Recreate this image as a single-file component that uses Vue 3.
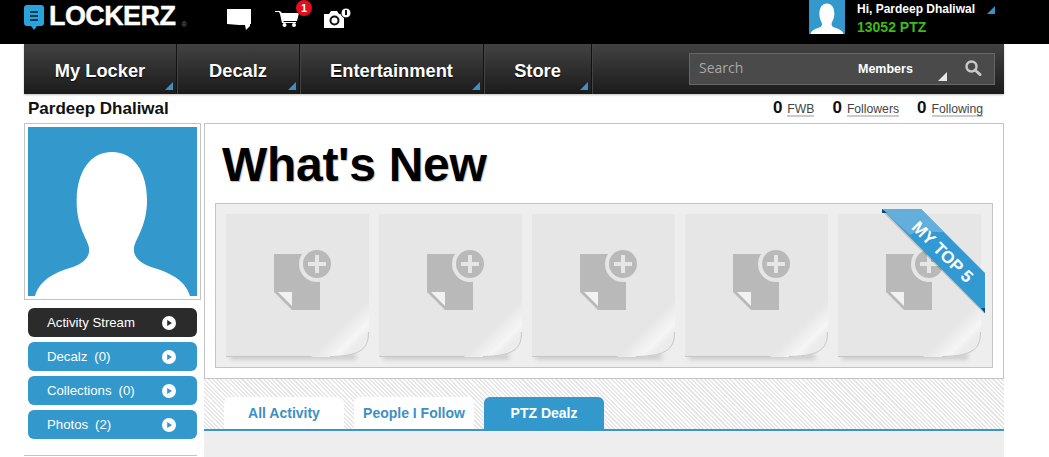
<template>
  <div class="page">
    <!-- Top bar -->
    <header class="topbar">
      <div class="logo">
        <svg class="logo-icon" width="20" height="26" viewBox="0 0 20 26">
          <path d="M3 0H17a3 3 0 0 1 3 3V18a3 3 0 0 1-3 3H13L10 25 7 21H3a3 3 0 0 1-3-3V3a3 3 0 0 1 3-3Z" fill="#29a3dc" />
          <path d="M6 6H14V8H6ZM6 10H14V12H6ZM6 14H14V16H6Z" fill="#0b3b52" />
        </svg>
        <span class="logo-text">LOCKERZ</span>
        <span class="logo-reg">®</span>
      </div>
      <div class="top-icons">
        <svg width="24" height="21" viewBox="0 0 24 21">
          <path d="M0 0H24V15H23V17L19 21 18 16H12L0 15Z" fill="#fff" />
        </svg>
        <div class="cart">
          <svg width="24" height="17" viewBox="0 0 24 17">
            <path d="M0 1H5L7 3H24L22 11H8L9 12H21V13H7L5 4 4 2H0Z" fill="#fff" />
            <circle cx="9.500" cy="15" r="2" fill="#fff" />
            <circle cx="19" cy="15" r="2" fill="#fff" />
          </svg>
          <span class="badge">1</span>
        </div>
        <svg width="27" height="20" viewBox="0 0 27 20">
          <path d="M0 6H5L7 3H13L15 6H20V20H0Z" fill="#fff" />
          <circle cx="10.500" cy="12.500" r="5" fill="#111" />
          <circle cx="10.500" cy="12.500" r="3" fill="#fff" />
          <circle cx="22" cy="5" r="5" fill="#fff" stroke="#000" stroke-width="1" />
          <path d="M21 2H23V7H21Z" fill="#111" />
        </svg>
      </div>
      <div class="user">
        <svg class="user-pic" width="36" height="34" viewBox="0 9 169 160">
          <rect x="0" y="0" width="169" height="169" fill="#3399cc" />
          <path :d="personPath" fill="#fff" />
        </svg>
        <div class="user-text">
          <div class="user-name">Hi, Pardeep Dhaliwal</div>
          <div class="user-ptz">13052 PTZ</div>
        </div>
        <span class="corner user-corner"></span>
      </div>
    </header>

    <div class="wrap">
      <!-- Main nav -->
      <nav class="nav">
        <a v-for="item in navItems" :key="item.label" class="nav-item" :class="item.cls">
          {{ item.label }}
          <span class="corner nav-corner"></span>
        </a>
        <div class="search">
          <span class="search-label">Search</span>
          <span class="search-scope">Members</span>
          <span class="corner scope-corner"></span>
          <svg class="search-icon" width="17" height="16" viewBox="0 0 17 16">
            <circle cx="6.500" cy="6.500" r="5" fill="none" stroke="#c9c9c9" stroke-width="2.400" />
            <path d="M10 10L15 14.500" stroke="#c9c9c9" stroke-width="3" stroke-linecap="round" />
          </svg>
        </div>
      </nav>

      <div class="name-row">
        <h2 class="profile-name">Pardeep Dhaliwal</h2>
        <div class="stats">
          <span v-for="s in stats" :key="s.label" class="stat">
            <b>0</b><u>{{ s.label }}</u>
          </span>
        </div>
      </div>

      <div class="columns">
        <!-- Left column -->
        <aside class="side">
          <div class="photo">
            <svg width="169" height="169" viewBox="0 0 169 169">
              <rect width="169" height="169" fill="#3399cc" />
              <path :d="personPath" fill="#fff" />
            </svg>
          </div>
          <div class="side-menu">
            <a v-for="b in sideItems" :key="b.label" class="side-btn" :class="{ dark: b.dark }">
              <span class="side-label">{{ b.label }}<span v-if="b.count" class="side-count">{{ b.count }}</span></span>
              <svg width="14" height="14" viewBox="0 0 14 14">
                <circle cx="7" cy="7" r="7" fill="#fff" />
                <path d="M5.200 4L10 7 5.200 10Z" :fill="b.dark ? '#2b2b2b' : '#3399cc'" />
              </svg>
            </a>
          </div>
          <div class="side-next"></div>
        </aside>

        <!-- Main column -->
        <main class="main">
          <section class="panel">
            <h1 class="title">What's New</h1>
            <div class="strip">
              <div v-for="n in 5" :key="n" class="card">
                <svg width="143" height="143" viewBox="0 0 143 143">
                  <defs>
                    <linearGradient id="curl" gradientUnits="userSpaceOnUse" x1="114" y1="114" x2="131" y2="131">
                      <stop offset="0" stop-color="#e6e6e6" />
                      <stop offset="0.700" stop-color="#f5f5f5" />
                      <stop offset="1" stop-color="#ececec" />
                    </linearGradient>
                    <filter id="blur" x="-10%" y="-100%" width="120%" height="300%">
                      <feGaussianBlur stdDeviation="2.500" />
                    </filter>
                  </defs>
                  <rect x="4" y="140" width="126" height="5" fill="#000" opacity="0.180" filter="url(#blur)" />
                  <path d="M0 0H143V118C143 134 136 142 104 143H0Z" fill="#e6e6e6" />
                  <path d="M0 142.500H104" stroke="#c6c6c6" stroke-width="1" />
                  <path d="M143 85V118C143 134 136 142 104 143H85Z" fill="url(#curl)" />
                  <path d="M142.500 118C142.500 134 136 142 104 142.500" fill="none" stroke="#c8c8c8" stroke-width="1" />
                  <path d="M48 40H94V96H66L48 78Z" fill="#b9b9b9" />
                  <path d="M52 78H66V92Z" fill="#f2f2f2" />
                  <circle cx="91" cy="50" r="18" fill="#e6e6e6" />
                  <circle cx="91" cy="50" r="14" fill="#b9b9b9" />
                  <path d="M89 41H93V48H100V52H93V59H89V52H82V48H89Z" fill="#e6e6e6" />
                </svg>
              </div>
              <svg class="ribbon" width="104" height="105" viewBox="0 0 104 105">
                <path d="M0 1L103 104" stroke="#000" stroke-opacity="0.150" stroke-width="2" />
                <path d="M0 0H39L103 64V104Z" fill="#3399d2" />
                <path d="M0 0H39L62 23C50 24 38 20 28 26Z" fill="#64aedc" />
                <path d="M0 0V4L5 4Z" fill="#0f4a73" />
                <path d="M103 99V104L99 99Z" fill="#0f4a73" />
                <text x="0" y="0" transform="translate(56.500 47) rotate(45)" text-anchor="middle" class="ribbon-text">MY TOP 5</text>
              </svg>
            </div>
          </section>

          <section class="activity">
            <div class="tabs">
              <a class="tab">All Activity</a>
              <a class="tab">People I Follow</a>
              <a class="tab active">PTZ Dealz</a>
            </div>
          </section>
          <div class="feed"></div>
        </main>
      </div>
    </div>
  </div>
</template>

<script setup>
const personPath =
  'M7 169C12 152 28 145 45 140C56 136 62 130 61 121C60 112 48 100 48.700 73C49 45 62 25 84 25C106 25 119 45 119 73C119 100 107 112 106 121C105 130 112 136 123 140C140 145 157 152 162 169Z'

const navItems = [
  { label: 'My Locker', cls: 'w-locker' },
  { label: 'Decalz', cls: 'w-decalz' },
  { label: 'Entertainment', cls: 'w-ent' },
  { label: 'Store', cls: 'w-store' }
]

const stats = [{ label: 'FWB' }, { label: 'Followers' }, { label: 'Following' }]

const sideItems = [
  { label: 'Activity Stream', dark: true },
  { label: 'Decalz', count: '(0)' },
  { label: 'Collections', count: '(0)' },
  { label: 'Photos', count: '(2)' }
]
</script>

<style>
html,
body {
  margin: 0;
  background: #fff;
  overflow: hidden;
}
</style>

<style scoped>
.page {
  width: 1049px;
  height: 457px;
  overflow: hidden;
  font-family: "Liberation Sans", Arial, sans-serif;
  color: #111;
}

a {
  display: block;
}

.topbar {
  height: 44px;
  background: #000;
  display: flex;
  padding-left: 24px;
}

.logo {
  width: 203px;
  display: flex;
  align-items: flex-start;
}

.logo-icon {
  margin-top: 5px;
}

.logo-text {
  margin-left: 5px;
  margin-top: 1px;
  font-size: 27px;
  line-height: 31px;
  font-weight: 700;
  color: #fff;
  letter-spacing: -0.600px;
  -webkit-text-stroke: 0.400px #fff;
}

.logo-reg {
  font-size: 8px;
  color: #777;
  margin-left: 6px;
  margin-top: 20px;
}

.top-icons {
  width: 582px;
  display: flex;
  align-items: flex-start;
  padding-top: 9px;
  gap: 24px;
  box-sizing: border-box;
}

.cart {
  position: relative;
  width: 24px;
  margin-top: 1px;
}

.badge {
  position: absolute;
  left: 21px;
  top: -10px;
  width: 16px;
  height: 16px;
  border-radius: 50%;
  background: #e0101e;
  color: #fff;
  font-size: 11px;
  line-height: 16px;
  font-weight: 700;
  text-align: center;
}

.top-icons > svg:last-child {
  margin-left: 1px;
  margin-top: -1px;
}

.user {
  position: relative;
  display: flex;
  height: 34px;
}

.user-pic {
  display: block;
}

.user-text {
  margin-left: 12px;
  padding-top: 2px;
  font-weight: 700;
}

.user-name {
  font-size: 12px;
  line-height: 15px;
  color: #fff;
}

.user-ptz {
  font-size: 14px;
  line-height: 21px;
  color: #3dbb17;
}

.corner {
  position: absolute;
  width: 0;
  height: 0;
  border-style: solid;
  border-width: 0 0 8px 8px;
  border-color: transparent transparent #3f8fc4 transparent;
}

.user-corner {
  left: 178px;
  top: 6px;
}

.wrap {
  width: 980px;
  margin-left: 24px;
}

.nav {
  height: 50px;
  display: flex;
  background: linear-gradient(#424242, #1b1b1b);
  position: relative;
  box-shadow: 0 1px 2px rgba(0, 0, 0, 0.25);
}

.nav-item {
  position: relative;
  box-sizing: border-box;
  border-right: 1px solid #111;
  box-shadow: 1px 0 0 #444;
  text-align: center;
  color: #fff;
  font-size: 18.300px;
  font-weight: 700;
  line-height: 54px;
  text-shadow: 0 1px 1px #000;
}

.w-locker {
  width: 153px;
}

.w-decalz {
  width: 123px;
}

.w-ent {
  width: 184px;
}

.w-store {
  width: 108px;
}

.nav-corner {
  right: 3px;
  bottom: 4px;
}

.search {
  position: absolute;
  left: 665px;
  top: 9px;
  box-sizing: border-box;
  width: 306px;
  height: 32px;
  display: flex;
  align-items: center;
  background: #4a4a4a;
  border: 1px solid #666;
}

.search-label {
  margin-left: 9px;
  margin-top: -3px;
  width: 159px;
  font-family: "Open Sans", sans-serif;
  font-size: 14px;
  color: #a8a8a8;
}

.search-scope {
  font-size: 12.500px;
  font-weight: 700;
  color: #fff;
}

.scope-corner {
  left: 248px;
  top: 18px;
  border-width: 0 0 9px 9px;
  border-color: transparent transparent #e8e8e8 transparent;
}

.search-icon {
  margin-left: 52px;
  margin-top: -2px;
}

.name-row {
  height: 29px;
  display: flex;
  align-items: center;
  justify-content: space-between;
  padding: 0 21px 0 4px;
}

.profile-name {
  margin: 0;
  font-size: 17px;
  line-height: 30px;
  font-weight: 700;
  color: #111;
}

.stats {
  display: flex;
  gap: 18px;
  margin-top: -2px;
}

.stat {
  display: flex;
  align-items: baseline;
  font-size: 12.200px;
  color: #444;
}

.stat b {
  font-size: 17px;
  color: #111;
  margin-right: 5px;
}

.stat u {
  text-decoration: none;
  border-bottom: 2px solid #ccc;
  line-height: 12px;
}

.columns {
  display: flex;
  gap: 3px;
}

.side {
  width: 177px;
  flex: none;
}

.photo {
  box-sizing: border-box;
  width: 177px;
  height: 177px;
  padding: 3px;
  border: 1px solid #c4c4c4;
}

.photo svg {
  display: block;
}

.side-menu {
  margin: 8px 0 0 4px;
  display: flex;
  flex-direction: column;
  gap: 5px;
}

.side-btn {
  box-sizing: border-box;
  width: 169px;
  height: 29px;
  padding: 0 21px 0 19px;
  border-radius: 6px;
  background: #3399cc;
  color: #fff;
  display: flex;
  align-items: center;
  justify-content: space-between;
  font-size: 13.200px;
}

.side-btn.dark {
  background: #2b2b2b;
}

.side-count {
  margin-left: 7px;
}

.side-next {
  margin-top: 16px;
  width: 173px;
  border-top: 1px solid #c4c4c4;
}

.main {
  width: 800px;
  flex: none;
}

.panel {
  box-sizing: border-box;
  height: 256px;
  padding: 0 10px;
  border: 1px solid #c4c4c4;
}

.title {
  margin: 0;
  height: 79px;
  padding-left: 7px;
  font-size: 48px;
  line-height: 82px;
  font-weight: 700;
  color: #000;
  letter-spacing: -0.300px;
  text-shadow: 1px 1px 1px rgba(0, 0, 0, 0.25);
}

.strip {
  position: relative;
  box-sizing: border-box;
  height: 165px;
  width: 778px;
  padding: 10px;
  display: flex;
  gap: 10px;
  background: #eee;
  border: 1px solid #c4c4c4;
}

.card {
  width: 143px;
  height: 143px;
}

.card svg {
  display: block;
  overflow: visible;
}

.ribbon {
  position: absolute;
  left: 666px;
  top: 5px;
}

.ribbon-text {
  font-family: "Liberation Sans", Arial, sans-serif;
  font-size: 17px;
  font-weight: 700;
  fill: #fff;
}

.activity {
  height: 50px;
  box-sizing: border-box;
  padding: 18px 0 0 20px;
  background: repeating-linear-gradient(45deg, #fff 0, #fff 1.500px, #e6e6e6 1.500px, #e6e6e6 3px);
}

.tabs {
  display: flex;
  gap: 10px;
}

.tab {
  width: 120px;
  height: 32px;
  border-radius: 6px 6px 0 0;
  background: #fff;
  color: #3d8fc4;
  font-size: 14px;
  font-weight: 700;
  line-height: 32px;
  text-align: center;
}

.tab.active {
  background: #3399cc;
  color: #fff;
}

.feed {
  height: 40px;
  background: #eee;
  border-top: 2px solid #3d94c6;
}
</style>
